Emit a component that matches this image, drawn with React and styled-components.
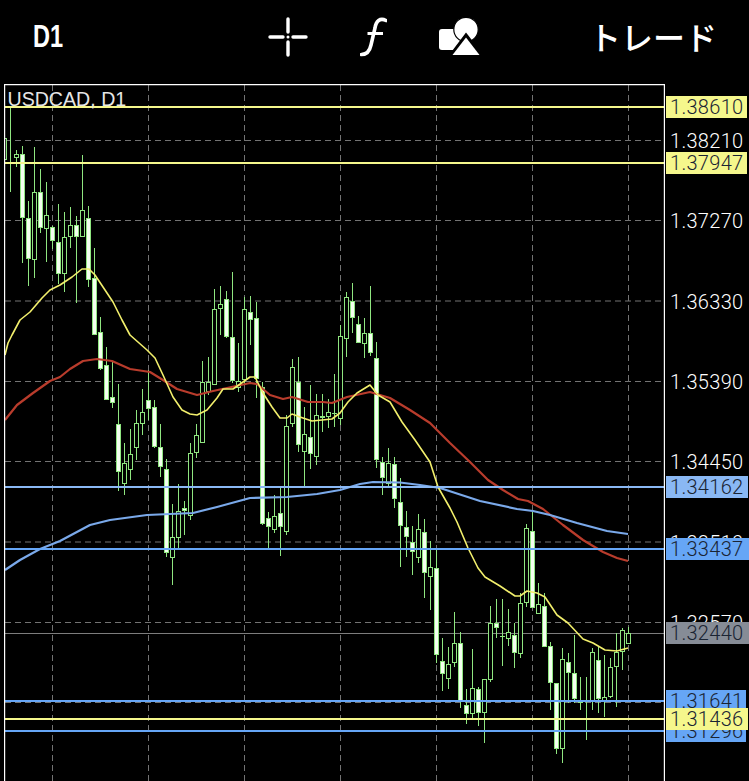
import React from 'react';
import styled, { createGlobalStyle } from 'styled-components';

const GlobalStyle = createGlobalStyle`
    html, body {
        margin: 0;
        padding: 0;
        background: #000;
    }
`;

const Page = styled.div`
    width: 749px;
    height: 781px;
    background: #000;
    overflow: hidden;
    display: flex;
    flex-direction: column;
`;

const Header = styled.header`
    height: 84px;
    flex: none;
    display: flex;
    align-items: center;
    padding: 0 33px;
    box-sizing: border-box;
    color: #fff;
`;

const Timeframe = styled.div`
    width: 235px;
    flex: none;
    font: bold 31px "Liberation Sans", sans-serif;
    margin-top: -11px;
    transform: scaleX(0.76);
    transform-origin: left center;
`;

const Tools = styled.div`
    display: flex;
    align-items: center;
    gap: 52px;
    margin-top: -11px;
`;

const ToolIcon = styled.svg`
    display: block;
    flex: none;
    width: ${(p) => p.$w}px;
    height: 40px;
`;

const TradeButton = styled.div`
    margin-left: auto;
    margin-top: -13px;
    margin-right: -1px;
    font: 500 32px "Noto Sans CJK JP", sans-serif;
    line-height: 40px;
    white-space: nowrap;
`;

const ChartSvg = styled.svg`
    display: block;
    flex: 1;
    width: 749px;
    min-height: 0;
`;

const GridLine = styled.line`
    stroke: #737373;
    stroke-width: 1;
    stroke-dasharray: 6 4;
`;

const AxisText = styled.text`
    font: 300 20px Roboto, "Liberation Sans", sans-serif;
    letter-spacing: 0.3px;
    fill: ${(p) => p.$color || '#fff'};
`;

const ChartTitle = styled.text`
    font: 19.6px "Liberation Sans", sans-serif;
    fill: #e6e6e6;
`;

const LevelLine = styled.line`
    stroke: ${(p) => p.$color};
    stroke-width: ${(p) => p.$size || 2};
`;

const Wick = styled.line`
    stroke: #8fe680;
    stroke-width: 1;
`;

const Body = styled.rect`
    stroke: #8fe680;
    stroke-width: 1;
    fill: ${(p) => (p.$filled ? '#f4fff0' : '#000')};
`;

const MaLine = styled.polyline`
    fill: none;
    stroke: ${(p) => p.$color};
    stroke-width: ${(p) => p.$size || 2};
    stroke-linejoin: round;
`;

const Frame = styled.path`
    fill: none;
    stroke: #fff;
    stroke-width: 1.2;
`;

const Tag = styled.rect`
    fill: ${(p) => p.$color};
`;

// wick top, wick bottom, body top, body bottom, filled
const candles = [
    [138, 159, 138, 159, 0], [107, 192, 162, 162, 0], [150, 167, 154, 157, 0], [146, 263, 154, 217, 1],
    [201, 286, 218, 258, 1], [147, 278, 192, 259, 0], [169, 233, 192, 227, 1], [182, 262, 215, 228, 0],
    [226, 249, 227, 240, 1], [204, 284, 242, 273, 1], [212, 292, 237, 273, 0], [207, 248, 225, 236, 0],
    [216, 303, 225, 236, 1], [155, 237, 210, 236, 0], [206, 287, 218, 279, 1], [248, 335, 278, 334, 1],
    [317, 370, 332, 368, 1], [347, 400, 365, 399, 1], [362, 408, 397, 402, 1], [384, 491, 424, 471, 1],
    [443, 495, 463, 483, 0], [429, 480, 454, 469, 0], [410, 460, 423, 447, 0], [389, 435, 412, 423, 0],
    [370, 420, 400, 408, 1], [400, 448, 407, 446, 1], [424, 477, 447, 466, 1], [459, 557, 469, 552, 1],
    [504, 585, 537, 557, 0], [484, 548, 511, 537, 0], [501, 535, 508, 510, 1], [443, 520, 453, 515, 0],
    [424, 458, 435, 452, 0], [361, 443, 382, 442, 0], [357, 395, 382, 391, 0], [289, 385, 309, 384, 0],
    [286, 335, 304, 308, 0], [291, 338, 299, 336, 1], [272, 383, 337, 380, 1], [343, 392, 381, 387, 0],
    [297, 385, 309, 379, 0], [296, 345, 312, 319, 1], [302, 398, 318, 378, 1], [382, 525, 387, 523, 1],
    [512, 550, 518, 526, 1], [495, 533, 516, 529, 0], [487, 556, 513, 526, 1], [415, 535, 426, 531, 0],
    [359, 427, 367, 423, 0], [357, 452, 382, 444, 1], [407, 487, 434, 451, 0], [385, 469, 437, 453, 1],
    [394, 465, 415, 456, 0], [394, 432, 416, 417, 1], [399, 428, 412, 416, 0], [374, 427, 413, 413, 0],
    [325, 425, 336, 418, 0], [292, 357, 297, 338, 0], [283, 333, 301, 317, 1], [316, 343, 324, 342, 1],
    [318, 358, 333, 343, 0], [286, 356, 333, 352, 1], [342, 468, 358, 459, 1], [457, 495, 462, 477, 1],
    [448, 487, 463, 483, 0], [457, 508, 464, 498, 1], [478, 567, 502, 525, 1], [511, 557, 527, 536, 1],
    [526, 575, 542, 551, 1], [514, 563, 529, 557, 0], [519, 598, 532, 572, 1], [541, 610, 567, 576, 0],
    [548, 663, 568, 654, 1], [638, 691, 661, 673, 1], [647, 689, 664, 678, 0], [612, 667, 643, 662, 0],
    [632, 708, 643, 701, 1], [689, 724, 705, 713, 1], [649, 718, 688, 713, 0], [687, 726, 689, 712, 1],
    [679, 743, 679, 712, 0], [606, 682, 623, 679, 0], [599, 638, 623, 627, 1], [599, 666, 636, 636, 0],
    [609, 646, 632, 638, 0], [623, 668, 635, 652, 1], [593, 658, 603, 653, 0], [524, 607, 528, 602, 0],
    [512, 607, 531, 607, 1], [583, 614, 604, 613, 0], [593, 646, 606, 646, 1], [642, 710, 646, 682, 1],
    [683, 754, 683, 748, 1], [648, 763, 659, 748, 0], [653, 703, 662, 672, 1], [635, 703, 673, 698, 1],
    [677, 710, 702, 702, 0], [677, 740, 700, 700, 0], [648, 710, 652, 700, 0], [647, 713, 660, 698, 1],
    [655, 717, 697, 700, 0], [658, 698, 667, 696, 0], [633, 707, 652, 666, 0], [628, 670, 630, 651, 0],
    [627, 643, 633, 643, 0],
];

const yellowMa = '5,355 8,343 12,335 20,320 30,312 42,298 50,290 60,285 72,277 82,269 89,269 95,275 103,287 113,302 122,320 130,335 147,350 155,358 163,375 173,397 182,410 190,414 197,415 207,410 217,398 223,389 233,389 243,382 250,377 255,377 263,393 272,407 280,418 287,418 292,414 300,417 312,421 332,419 340,413 348,402 357,393 370,385 378,395 390,402 402,422 415,440 430,462 438,487 450,508 457,522 468,548 478,568 485,577 500,586 515,596 520,596 527,591 537,593 545,597 557,615 568,623 583,639 593,643 605,650 617,651 628,648';
const redMa = '5,420 17,405 33,393 50,381 60,377 70,369 83,361 97,359 112,361 130,369 150,372 163,380 177,389 197,395 213,391 227,388 250,383 257,384 270,395 283,399 292,397 308,402 323,402 332,403 347,397 370,392 390,398 410,410 430,423 450,443 470,462 488,480 503,490 518,499 528,501 543,509 563,525 583,540 603,552 617,558 628,561';
const blueMa = '5,570 20,560 40,549 60,541 75,533 90,525 110,520 147,515 170,514 193,513 217,507 250,498 287,497 317,494 340,490 360,484 373,482 400,482.5 420,485 440,488 480,501 517,509 533,511 550,515 577,523 607,531 628,534';

const gridX = [52.5, 148.5, 244.5, 340.5, 436.5, 532.5, 628.5];
const gridY = [140.5, 220.5, 301, 381.5, 461.5, 542, 622.5, 702.5];
const axisLabels = ['1.38210', '1.37270', '1.36330', '1.35390', '1.34450', '1.33510', '1.32570', '1.31630'];

const YELLOW = '#f5f78c';
const LIGHT_BLUE = '#8ab8f4';
const BLUE = '#66a6f6';

const levels = [
    { price: '1.31296', y: 731, color: BLUE, w: 80 },
    { price: '1.31641', y: 701, color: BLUE, w: 80 },
    { price: '1.31436', y: 719, color: YELLOW, w: 82 },
    { price: '1.38610', y: 107, color: YELLOW, w: 81 },
    { price: '1.37947', y: 163, color: YELLOW, w: 81 },
    { price: '1.34162', y: 487, color: LIGHT_BLUE, w: 82 },
    { price: '1.33437', y: 549, color: BLUE, w: 83 },
];

function Candle({ data, index }) {
    const [top, bottom, bodyTop, bodyBottom, filled] = data;
    const x = 4.5 + index * 6;
    return (
        <g>
            <Wick x1={x} x2={x} y1={top} y2={bottom} />
            {bodyBottom > bodyTop ? (
                <Body x={x - 2} y={bodyTop + 0.5} width={4} height={bodyBottom - bodyTop} $filled={!!filled} />
            ) : (
                <Wick x1={x - 2.5} x2={x + 2.5} y1={bodyTop + 0.5} y2={bodyTop + 0.5} />
            )}
        </g>
    );
}

function PriceTag({ price, y, color, w }) {
    return (
        <g>
            <Tag x={666} y={y - 11} width={w} height={22} $color={color} />
            <AxisText x={670} y={y + 6.8} $color="#1a2433">{price}</AxisText>
        </g>
    );
}

function Crosshair() {
    return (
        <ToolIcon $w={40} viewBox="0 0 40 40">
            <g stroke="#fff" strokeWidth="3.4" strokeLinecap="round">
                <path d="M2 20H15M25 20H38M20 2V15M20 25V38" />
            </g>
            <circle cx="20" cy="20" r="1.5" fill="#fff" />
        </ToolIcon>
    );
}

function FunctionIcon() {
    return (
        <ToolIcon $w={27} viewBox="0 0 27 40">
            <path d="M26 3.5C20 0.5 16 4 15 11L11 28C9.5 35 6.5 37.5 1.5 37.5" fill="none" stroke="#fff" strokeWidth="3.6" strokeLinecap="round" />
            <path d="M7.5 16.5H23" stroke="#fff" strokeWidth="3" />
        </ToolIcon>
    );
}

function ShapesIcon() {
    return (
        <ToolIcon $w={41} viewBox="0 0 41 40">
            <rect x="0" y="12" width="23" height="21" rx="3" fill="#fff" />
            <circle cx="27" cy="12.5" r="12.2" fill="#fff" stroke="#000" strokeWidth="1.2" />
            <polygon points="27,20 40.5,38 13.5,38" fill="#fff" stroke="#000" strokeWidth="5.5" strokeLinejoin="miter" />
            <polygon points="27,20.5 40.5,38 13.5,38" fill="#fff" />
        </ToolIcon>
    );
}

export default function App() {
    return (
        <Page>
            <GlobalStyle />
            <Header>
                <Timeframe>D1</Timeframe>
                <Tools>
                    <Crosshair />
                    <FunctionIcon />
                    <ShapesIcon />
                </Tools>
                <TradeButton>トレード</TradeButton>
            </Header>
            <ChartSvg viewBox="0 84 749 697">
                <defs>
                    <clipPath id="plot">
                        <rect x={5} y={85} width={659} height={696} />
                    </clipPath>
                </defs>
                {gridY.map((y) => <GridLine key={y} x1={5} x2={664} y1={y} y2={y} />)}
                {gridX.map((x) => <GridLine key={x} x1={x} x2={x} y1={85} y2={781} />)}
                {axisLabels.map((label, i) => (
                    <AxisText key={label} x={670} y={gridY[i] + 7.5}>{label}</AxisText>
                ))}
                <LevelLine $color="#7d7d7d" $size={1} x1={5} x2={664} y1={633.5} y2={633.5} />
                <g clipPath="url(#plot)">
                    {candles.map((c, i) => <Candle key={i} data={c} index={i} />)}
                </g>
                <MaLine $color="#b93c2c" $size={2.2} points={redMa} />
                <MaLine $color="#7aa9ea" $size={2.2} points={blueMa} />
                <MaLine $color="#f2ef6c" $size={1.6} points={yellowMa} />
                {levels.map((l) => (
                    <LevelLine key={l.price} $color={l.color} x1={5} x2={664} y1={l.y} y2={l.y} />
                ))}
                <Frame d="M4.6 781V84.6H664.4V781" />
                <ChartTitle x={7.5} y={106}>USDCAD, D1</ChartTitle>
                <Tag x={666} y={622} width={83} height={22} $color="#868c96" />
                <AxisText x={670} y={640} $color="#1a2433">1.32440</AxisText>
                {levels.map((l) => <PriceTag key={l.price} {...l} />)}
            </ChartSvg>
        </Page>
    );
}
